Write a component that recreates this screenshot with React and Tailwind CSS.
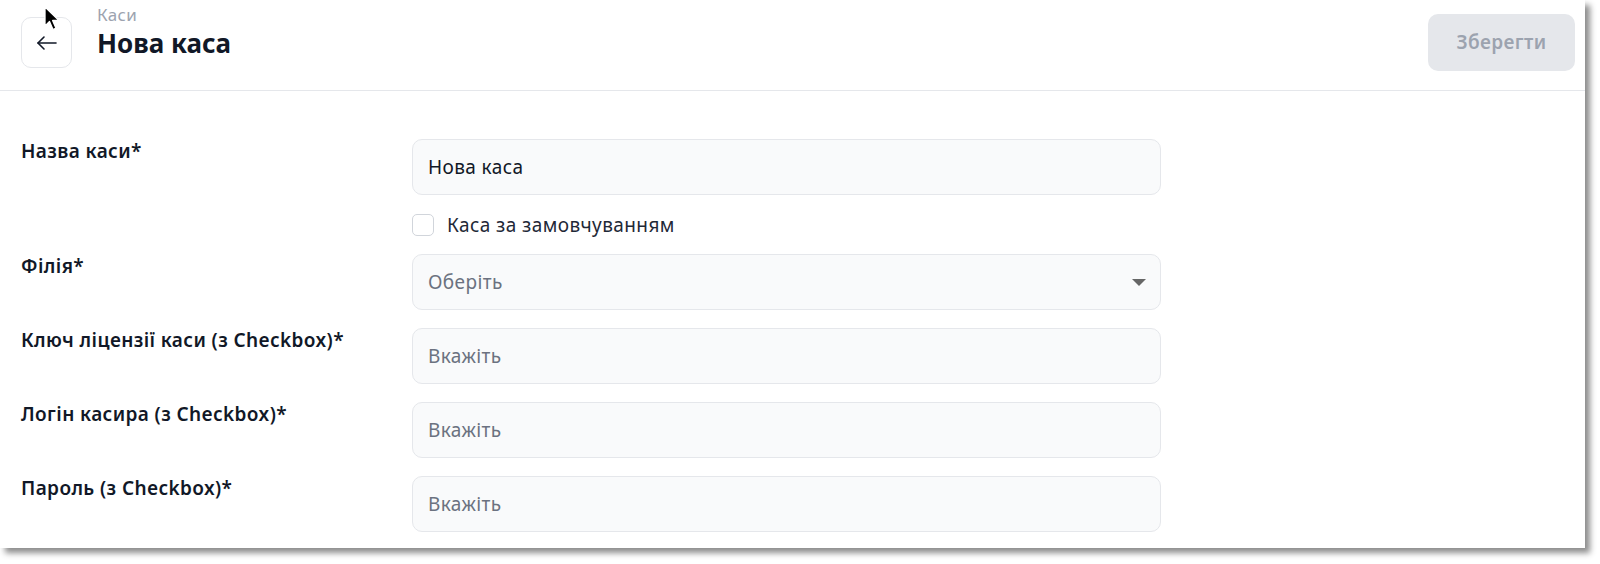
const font = { fontFamily: '"Noto Sans", "Open Sans", sans-serif' }

function Field({ placeholder, value }) {
  return (
    <div className="h-[56px] w-[749px] rounded-[10px] border border-[#e5e7eb] bg-[#f9fafb] flex items-center pl-[15px] text-[19px] tracking-[0.4px]">
      {value ? (
        <span className="text-[#111827]">{value}</span>
      ) : (
        <span className="text-[#6b7280]">{placeholder}</span>
      )}
    </div>
  )
}

function Label({ children }) {
  return (
    <div className="text-[19px] leading-[24px] tracking-[0.4px] font-semibold text-[#111827]">
      {children}
    </div>
  )
}

function Row({ label, children }) {
  return (
    <div className="grid grid-cols-[391px_749px]">
      <Label>{label}</Label>
      <div>{children}</div>
    </div>
  )
}

export default function App() {
  return (
    <div className="w-[1600px] h-[564px] bg-white overflow-hidden relative" style={font}>

      <div className="w-[1585px] h-[548px] bg-white shadow-[5px_5px_6px_rgba(0,0,0,0.45)]">

        {/* HEADER */}
        <div className="h-[91px] border-b border-[#e5e7eb] flex items-start justify-between pl-[21px] pr-[10px]">
          <div className="flex items-start">
            <button className="mt-[17px] w-[51px] h-[51px] rounded-[10px] border border-[#e5e7eb] bg-white flex items-center justify-center text-[#111827]">
              <svg width="22" height="16" viewBox="0 0 22 16" fill="none" stroke="currentColor" strokeWidth="1.6" strokeLinecap="round" strokeLinejoin="round">
                <path d="M20 8H2" />
                <path d="M8 2 2 8l6 6" />
              </svg>
            </button>
            <div className="ml-[25px]">
              <div className="text-[17px] leading-[24px] tracking-[0.3px] text-[#9ca3af] mt-[3px]">Каси</div>
              <div className="text-[26px] leading-[32px] font-bold text-[#111827]">Нова каса</div>
            </div>
          </div>
          <button className="mt-[14px] w-[147px] h-[57px] rounded-[10px] bg-[#e5e7eb] text-[#9ca3af] text-[19px] tracking-[0.4px] font-semibold">
            Зберегти
          </button>
        </div>

        {/* FORM */}
        <div className="pl-[21px] pt-[48px] flex flex-col gap-[18px]">

          <Row label="Назва каси*">
            <Field value="Нова каса" />
            <label className="mt-[19px] flex items-center gap-[13px] text-[19px] leading-[22px] tracking-[0.4px] text-[#1f2937]">
              <span className="w-[22px] h-[22px] rounded-[5px] border border-[#d1d5db] bg-white" />
              Каса за замовчуванням
            </label>
          </Row>

          <Row label="Філія*">
            <div className="h-[56px] w-[749px] rounded-[10px] border border-[#e5e7eb] bg-[#f9fafb] flex items-center justify-between pl-[15px] pr-[14px] text-[19px] tracking-[0.4px]">
              <span className="text-[#6b7280]">Оберіть</span>
              <svg width="14" height="7" viewBox="0 0 14 7">
                <path d="M0 0h14L7 7z" fill="#666" />
              </svg>
            </div>
          </Row>

          <Row label="Ключ ліцензії каси (з Checkbox)*">
            <Field placeholder="Вкажіть" />
          </Row>

          <Row label="Логін касира (з Checkbox)*">
            <Field placeholder="Вкажіть" />
          </Row>

          <Row label="Пароль (з Checkbox)*">
            <Field placeholder="Вкажіть" />
          </Row>

        </div>
      </div>

      {/* CURSOR */}
      <svg className="absolute left-[44px] top-[6px]" width="16" height="26" viewBox="0 0 16 26">
        <path d="M1 1v19l4.5-4.5 3.5 8 3-1.3-3.4-7.7H15z" fill="#000" stroke="#fff" strokeWidth="1.3" strokeLinejoin="round" />
      </svg>
    </div>
  )
}
